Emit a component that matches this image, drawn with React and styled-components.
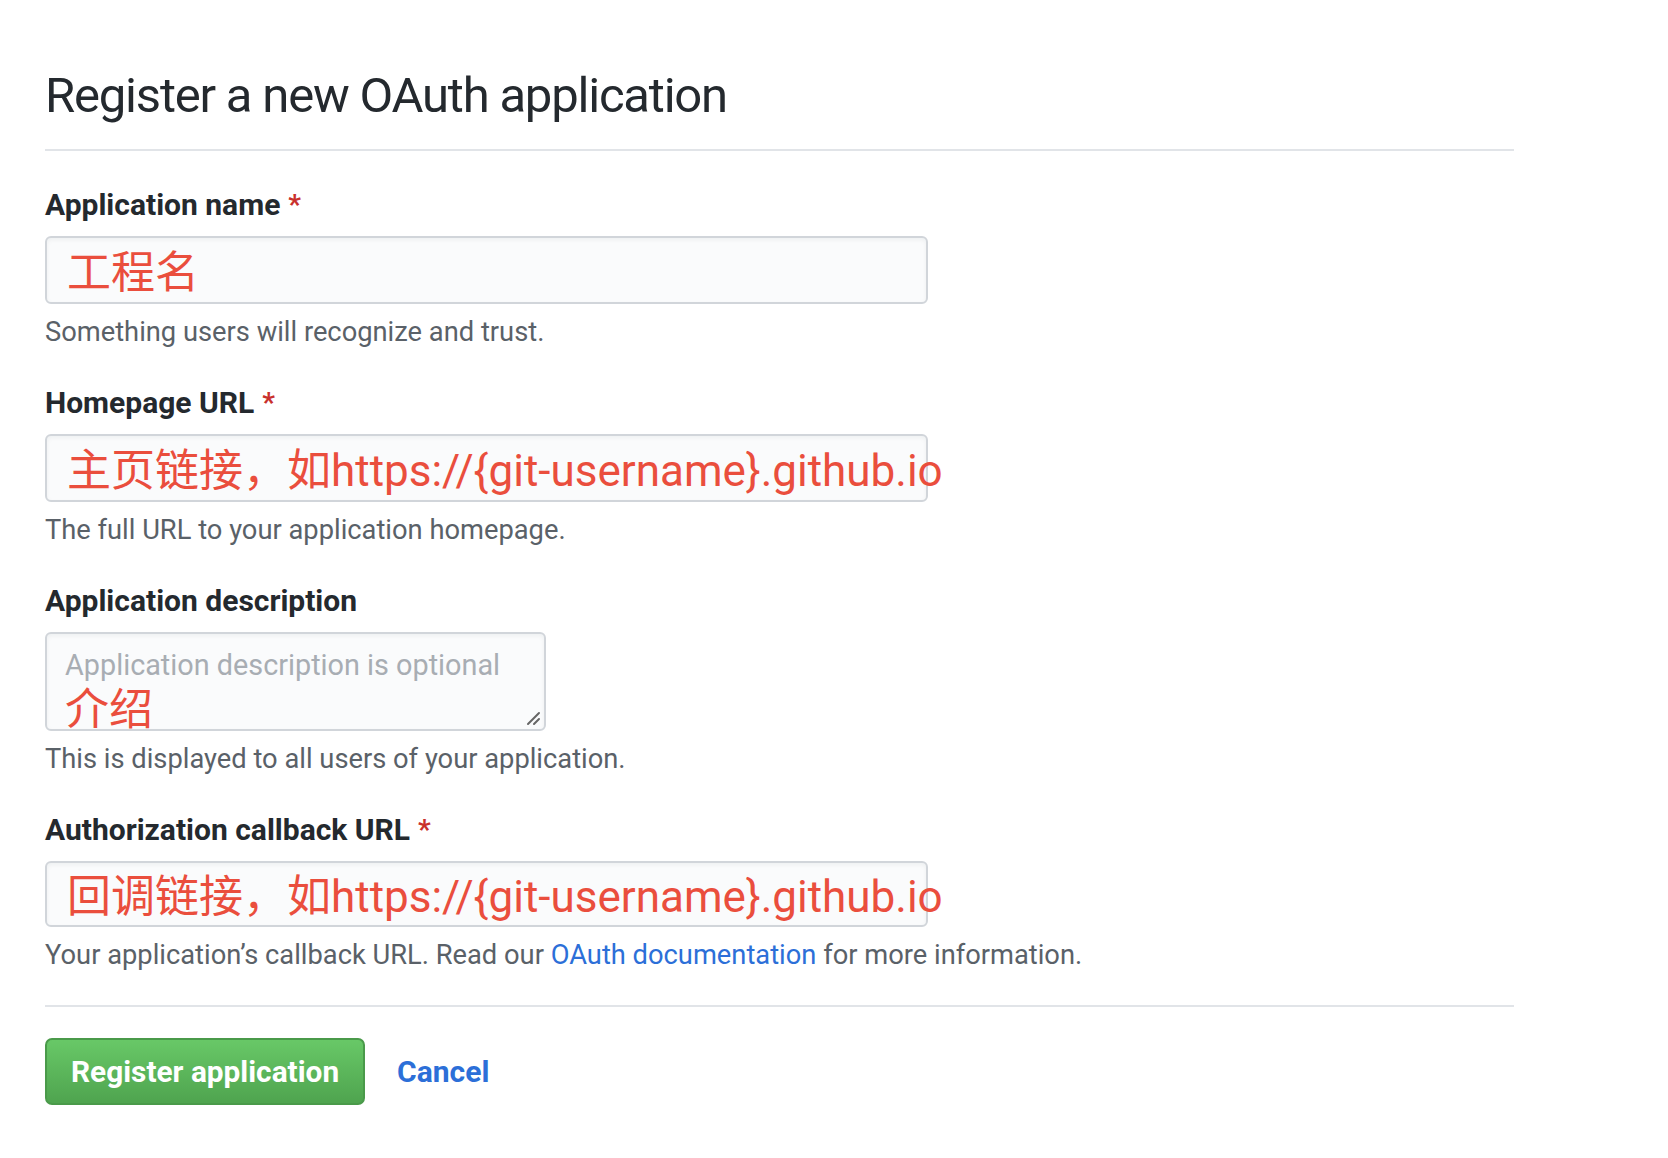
import React from 'react';
import styled, { createGlobalStyle } from 'styled-components';

const GlobalStyle = createGlobalStyle`
  html, body {
    margin: 0;
    padding: 0;
    background: #ffffff;
  }
  body {
    font-family: Roboto, "Noto Sans", "Noto Sans CJK SC", sans-serif;
    color: #24292e;
  }
`;

const Page = styled.div`
  width: 1469px;
  padding: 64px 0 40px 45px;
`;

const Title = styled.h1`
  margin: 0;
  padding-bottom: 21px;
  border-bottom: 2px solid #e1e4e8;
  font-size: 49px;
  line-height: 64px;
  font-weight: 400;
  letter-spacing: -1.2px;
  color: #24292e;
`;

const Form = styled.form`
  display: flex;
  flex-direction: column;
  padding-top: 33px;
`;

const Group = styled.div`
  display: flex;
  flex-direction: column;

  & + & {
    margin-top: 32px;
  }
`;

const Label = styled.label`
  display: flex;
  align-items: center;
  gap: 8px;
  height: 40px;
  font-size: 30px;
  font-weight: 700;
  color: #24292e;
`;

const Required = styled.span`
  color: #c9302c;
  font-size: 28px;
`;

const Field = styled.div`
  box-sizing: border-box;
  position: relative;
  display: flex;
  flex-direction: column;
  justify-content: ${({ $multi }) => ($multi ? 'flex-start' : 'center')};
  width: ${({ $width }) => $width}px;
  height: ${({ $height }) => $height}px;
  margin-top: 12px;
  padding: ${({ $multi }) => ($multi ? '12px 18px 0' : '5px 20px 0')};
  background: #fafbfc;
  border: 2px solid #d1d5da;
  border-radius: 6px;
  box-shadow: inset 0 2px 4px rgba(27, 31, 35, 0.05);
  overflow: visible;
  white-space: nowrap;
`;

const Annotation = styled.span`
  font-family: Roboto, "Noto Sans CJK SC", sans-serif;
  font-size: 44px;
  line-height: 52px;
  color: #ea4e3d;
`;

const Placeholder = styled.span`
  font-size: 28.8px;
  line-height: 38px;
  color: #a8adb3;
`;

const Grip = styled.svg`
  position: absolute;
  right: 3px;
  bottom: 3px;
`;

const Note = styled.p`
  margin: 10px 0 0;
  font-size: 27.3px;
  line-height: 36px;
  color: #5a6168;
`;

const Link = styled.a`
  color: #2c6fd8;
  text-decoration: none;
`;

const Divider = styled.hr`
  margin: 32px 0 31px;
  border: 0;
  border-top: 2px solid #e1e4e8;
`;

const Actions = styled.div`
  display: flex;
  align-items: center;
  gap: 32px;
`;

const Button = styled.button`
  box-sizing: border-box;
  height: 67px;
  padding: 0 24px;
  font-family: inherit;
  font-size: 29.8px;
  font-weight: 700;
  color: #ffffff;
  background-image: linear-gradient(180deg, #68c867 0%, #4fa44f 100%);
  border: 2px solid #4a9a4a;
  border-radius: 7px;
  cursor: pointer;
`;

const Cancel = styled.a`
  font-size: 30px;
  font-weight: 700;
  color: #2c6fd8;
  text-decoration: none;
`;

const fields = [
  {
    label: 'Application name',
    required: true,
    value: '工程名',
    note: 'Something users will recognize and trust.',
  },
  {
    label: 'Homepage URL',
    required: true,
    value: '主页链接，如https://{git-username}.github.io',
    note: 'The full URL to your application homepage.',
  },
];

const FormGroup = ({ label, required, children, note }) => (
  <Group>
    <Label>
      {label}
      {required && <Required>*</Required>}
    </Label>
    {children}
    <Note>{note}</Note>
  </Group>
);

export default function App() {
  return (
    <>
      <GlobalStyle />
      <Page>
        <Title>Register a new OAuth application</Title>
        <Form onSubmit={(e) => e.preventDefault()}>
          {fields.map((f) => (
            <FormGroup key={f.label} label={f.label} required={f.required} note={f.note}>
              <Field $width={883} $height={68}>
                <Annotation>{f.value}</Annotation>
              </Field>
            </FormGroup>
          ))}

          <FormGroup
            label="Application description"
            note="This is displayed to all users of your application."
          >
            <Field $multi $width={501} $height={99}>
              <Placeholder>Application description is optional</Placeholder>
              <Annotation>介绍</Annotation>
              <Grip width="16" height="16" viewBox="0 0 16 16">
                <path d="M14 3 L3 14 M14 9 L9 14" stroke="#666" strokeWidth="2" strokeLinecap="round" />
              </Grip>
            </Field>
          </FormGroup>

          <FormGroup
            label="Authorization callback URL"
            required
            note={
              <>
                Your application’s callback URL. Read our <Link href="#">OAuth documentation</Link> for more information.
              </>
            }
          >
            <Field $width={883} $height={66}>
              <Annotation>回调链接，如https://{'{'}git-username{'}'}.github.io</Annotation>
            </Field>
          </FormGroup>

          <Divider />
          <Actions>
            <Button type="submit">Register application</Button>
            <Cancel href="#">Cancel</Cancel>
          </Actions>
        </Form>
      </Page>
    </>
  );
}
